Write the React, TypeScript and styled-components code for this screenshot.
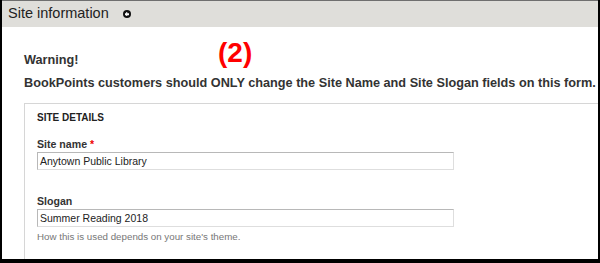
import styled, { createGlobalStyle } from "styled-components";

const GlobalStyle = createGlobalStyle`
  html, body {
    margin: 0;
    padding: 0;
    background: #000;
  }
  body {
    font-family: "Liberation Sans", Arial, sans-serif;
  }
`;

const Frame = styled.div`
  width: 596px;
  height: 258px;
  margin-left: 2px;
  border-top: 1px solid #6f6f6f;
  background: #fff;
  overflow: hidden;
  display: flex;
  flex-direction: column;
`;

const TitleBar = styled.div`
  height: 26px;
  background: #dfdeda;
  display: flex;
  align-items: center;
  gap: 14px;
  padding-left: 6px;
  flex-shrink: 0;
`;

const Title = styled.span`
  font-size: 14.5px;
  color: #222;
  margin-top: -2px;
`;

const Toggle = styled.span`
  width: 8px;
  height: 8px;
  border-radius: 50%;
  background: #111;
  position: relative;
  &::before,
  &::after {
    content: "";
    position: absolute;
    background: #fff;
    left: 50%;
    top: 50%;
    transform: translate(-50%, -50%);
  }
  &::before {
    width: 4px;
    height: 1.5px;
  }
  &::after {
    width: 1.5px;
    height: 4px;
  }
`;

const Body = styled.div`
  padding: 22px 0 0 22px;
  display: flex;
  flex-direction: column;
  position: relative;
`;

const Badge = styled.span`
  position: absolute;
  left: 216px;
  top: 10px;
  color: #ff0000;
  font-weight: bold;
  font-size: 28px;
`;

const Notice = styled.p`
  margin: 0;
  font-size: 12.7px;
  font-weight: bold;
  color: #333;
  line-height: 23px;
  white-space: nowrap;
`;

const Fieldset = styled.div`
  margin-top: 8px;
  width: 640px;
  border: 1px solid #d6d6d6;
  padding: 7px 12px 30px 12px;
`;

const Legend = styled.div`
  font-size: 10px;
  font-weight: bold;
  color: #222;
  text-transform: uppercase;
  line-height: 14px;
`;

const Field = styled.div<{ $gap: number }>`
  margin-top: ${(p) => p.$gap}px;
  display: flex;
  flex-direction: column;
`;

const Label = styled.label`
  font-size: 10.6px;
  font-weight: bold;
  color: #333;
  line-height: 13px;
`;

const Required = styled.span`
  color: #e00;
  margin-left: 3px;
`;

const Input = styled.div`
  width: 411px;
  height: 14px;
  margin-top: 1px;
  border: 1px solid #b8b8b8;
  border-right-color: #dedede;
  border-bottom-color: #dedede;
  padding: 1px 2px;
  font-size: 10.5px;
  color: #222;
  line-height: 14px;
`;

const Help = styled.div`
  margin-top: 4px;
  font-size: 9.75px;
  line-height: 12px;
  color: #777;
`;

export default function App() {
  return (
    <>
      <GlobalStyle />
      <Frame>
        <TitleBar>
          <Title>Site information</Title>
          <Toggle />
        </TitleBar>
        <Body>
          <Badge>(2)</Badge>
          <Notice>Warning!</Notice>
          <Notice>
            BookPoints customers should ONLY change the Site Name and Site
            Slogan fields on this form.
          </Notice>
          <Fieldset>
            <Legend>Site details</Legend>
            <Field $gap={13}>
              <Label>
                Site name<Required>*</Required>
              </Label>
              <Input>Anytown Public Library</Input>
            </Field>
            <Field $gap={25}>
              <Label>Slogan</Label>
              <Input>Summer Reading 2018</Input>
              <Help>How this is used depends on your site's theme.</Help>
            </Field>
          </Fieldset>
        </Body>
      </Frame>
    </>
  );
}
